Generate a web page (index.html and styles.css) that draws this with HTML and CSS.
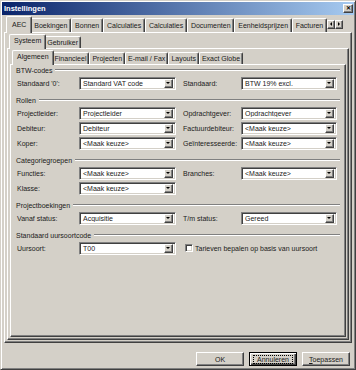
FILE: index.html
```html
<!DOCTYPE html>
<html lang="nl">
<head>
    <meta charset="UTF-8">
    <title>Instellingen</title>
    <link rel="stylesheet" href="styles.css">
</head>
<body>
    <div class="window">
        <div class="titlebar">
            <span class="title">Instellingen</span>
            <span class="close">&#x2715;</span>
        </div>

        <div class="tabs top">
            <div class="tab sel">AEC</div>
            <div class="tab">Boekingen</div>
            <div class="tab">Bonnen</div>
            <div class="tab">Calculaties</div>
            <div class="tab">Calculaties</div>
            <div class="tab">Documenten</div>
            <div class="tab">Eenheidsprijzen</div>
            <div class="tab">Facturen</div>
            <div class="scroll">
                <span class="arrow left"></span>
                <span class="arrow right"></span>
            </div>
        </div>
        <div class="page p1">
            <div class="tabs">
                <div class="tab sel">Systeem</div>
                <div class="tab">Gebruiker</div>
            </div>
            <div class="page p2">
                <div class="tabs">
                    <div class="tab sel">Algemeen</div>
                    <div class="tab">Financieel</div>
                    <div class="tab">Projecten</div>
                    <div class="tab">E-mail / Fax</div>
                    <div class="tab">Layouts</div>
                    <div class="tab">Exact Globe</div>
                </div>
                <div class="page p3">
                    <div class="form">
                        <div class="group">BTW-codes</div>
                        <div class="row">
                            <span class="lbl">Standaard '0':</span>
                            <div class="combo"><span class="val">Standard VAT code</span><span class="drop"></span></div>
                            <span class="lbl r">Standaard:</span>
                            <div class="combo r"><span class="val">BTW 19% excl.</span><span class="drop"></span></div>
                        </div>

                        <div class="group">Rollen</div>
                        <div class="row">
                            <span class="lbl">Projectleider:</span>
                            <div class="combo"><span class="val">Projectleider</span><span class="drop"></span></div>
                            <span class="lbl r">Opdrachtgever:</span>
                            <div class="combo r"><span class="val">Opdrachtgever</span><span class="drop"></span></div>
                        </div>
                        <div class="row">
                            <span class="lbl">Debiteur:</span>
                            <div class="combo"><span class="val">Debiteur</span><span class="drop"></span></div>
                            <span class="lbl r">Factuurdebiteur:</span>
                            <div class="combo r"><span class="val">&lt;Maak keuze&gt;</span><span class="drop"></span></div>
                        </div>
                        <div class="row">
                            <span class="lbl">Koper:</span>
                            <div class="combo"><span class="val">&lt;Maak keuze&gt;</span><span class="drop"></span></div>
                            <span class="lbl r">Geïnteresseerde:</span>
                            <div class="combo r"><span class="val">&lt;Maak keuze&gt;</span><span class="drop"></span></div>
                        </div>

                        <div class="group">Categoriegroepen</div>
                        <div class="row">
                            <span class="lbl">Functies:</span>
                            <div class="combo"><span class="val">&lt;Maak keuze&gt;</span><span class="drop"></span></div>
                            <span class="lbl r">Branches:</span>
                            <div class="combo r"><span class="val">&lt;Maak keuze&gt;</span><span class="drop"></span></div>
                        </div>
                        <div class="row">
                            <span class="lbl">Klasse:</span>
                            <div class="combo"><span class="val">&lt;Maak keuze&gt;</span><span class="drop"></span></div>
                        </div>

                        <div class="group">Projectboekingen</div>
                        <div class="row">
                            <span class="lbl">Vanaf status:</span>
                            <div class="combo"><span class="val">Acquisitie</span><span class="drop"></span></div>
                            <span class="lbl r">T/m status:</span>
                            <div class="combo r"><span class="val">Gereed</span><span class="drop"></span></div>
                        </div>

                        <div class="group">Standaard uursoortcode</div>
                        <div class="row">
                            <span class="lbl">Uursoort:</span>
                            <div class="combo"><span class="val">T00</span><span class="drop"></span></div>
                            <label class="check"><span class="box"></span>Tarieven bepalen op basis van uursoort</label>
                        </div>
                    </div>
                </div>
            </div>
        </div>

        <div class="footer">
            <button class="btn">OK</button>
            <button class="btn default"><span class="focus">Annuleren</span></button>
            <button class="btn"><u>T</u>oepassen</button>
        </div>
    </div>
</body>
</html>
```

FILE: styles.css
```css
body {
    margin: 0;
    background: #d4d0c8;
    font-family: "Liberation Sans", Arial, sans-serif;
    font-size: 7px;
    color: #1a1a1a;
}
.window {
    width: 356px;
    height: 370px;
    box-sizing: border-box;
    border: 1px solid;
    border-color: #d4d0c8 #404040 #404040 #d4d0c8;
    box-shadow: inset 1px 1px #fff, inset -1px -1px #808080;
    padding: 1px;
    display: flex;
    flex-direction: column;
    background: #d4d0c8;
}
.titlebar {
    height: 13px;
    display: flex;
    align-items: center;
    justify-content: space-between;
    padding: 0 1px 0 2px;
    background: linear-gradient(to right, #0a246a, #a6caf0);
    color: #fff;
}
.title {
    font-weight: bold;
    font-size: 7.5px;
}
.close {
    width: 10px;
    height: 9px;
    box-sizing: border-box;
    background: #d4d0c8;
    border: 1px solid;
    border-color: #fff #404040 #404040 #fff;
    box-shadow: inset -1px -1px #808080;
    color: #000;
    font-size: 6px;
    font-weight: bold;
    line-height: 7px;
    text-align: center;
}

/* tab strips */
.tabs {
    display: flex;
    align-items: flex-end;
    height: 14px;
    padding-left: 4px;
}
.tabs.top {
    height: 16px;
    margin: 1px 2px 0;
}
.tab {
    position: relative;
    box-sizing: border-box;
    height: 12px;
    padding: 0 2px;
    border: 1px solid;
    border-bottom: none;
    border-color: #fff #404040 #404040 #fff;
    border-radius: 2px 2px 0 0;
    box-shadow: inset -1px 0 #808080;
    line-height: 11px;
    white-space: nowrap;
    background: #d4d0c8;
}
.tabs.top .tab {
    height: 14px;
    padding: 0 3px;
    line-height: 13px;
    min-width: 25px;
    text-align: center;
}
.tab.sel {
    z-index: 1;
    height: 15px;
    margin: 0 -2px -1px;
    padding: 0 4px;
}
.tabs.top .tab.sel {
    height: 17px;
    padding: 1px 5px 0;
}
.scroll {
    display: flex;
    margin: 0 9px 3px auto;
}
.arrow {
    position: relative;
    width: 8px;
    height: 9px;
    box-sizing: border-box;
    border: 1px solid;
    border-color: #fff #404040 #404040 #fff;
    box-shadow: inset -1px -1px #808080;
}
.arrow::after {
    content: "";
    position: absolute;
    top: 1px;
    border: 2.5px solid transparent;
}
.arrow.left::after {
    left: 0;
    border-right: 2.5px solid #000;
}
.arrow.right::after {
    left: 2px;
    border-left: 2.5px solid #000;
}

/* tab pages */
.page {
    flex: 1;
    display: flex;
    flex-direction: column;
    border: 1px solid;
    border-color: #fff #404040 #404040 #fff;
    box-shadow: inset -1px -1px #808080;
    padding: 1px 2px 2px;
}
.p1 {
    margin: 0 2px;
}
.p3 {
    padding: 0;
}

/* form */
.form {
    padding: 0 5px 0 6px;
}
.group {
    display: flex;
    align-items: center;
    height: 10px;
    margin: 5px 0 0 -1px;
}
.group:first-child {
    margin-top: 0;
}
.group::after {
    content: "";
    flex: 1;
    margin-left: 3px;
    border-top: 1px solid #808080;
    border-bottom: 1px solid #fff;
}
.row {
    display: flex;
    align-items: center;
    height: 14px;
    margin-top: 1px;
}
.lbl {
    width: 62px;
    white-space: nowrap;
}
.lbl.r {
    width: 58px;
    margin-left: 7px;
}
.combo {
    width: 97px;
    height: 13px;
    box-sizing: border-box;
    display: flex;
    align-items: center;
    padding: 2px;
    background: #fff;
    border: 1px solid;
    border-color: #808080 #fff #fff #808080;
    box-shadow: inset 1px 1px #404040, inset -1px -1px #d4d0c8;
}
.combo.r {
    width: 96px;
}
.val {
    flex: 1;
    padding-left: 1px;
    white-space: nowrap;
    overflow: hidden;
}
.drop {
    position: relative;
    width: 9px;
    height: 9px;
    box-sizing: border-box;
    background: #d4d0c8;
    border: 1px solid;
    border-color: #fff #404040 #404040 #fff;
    box-shadow: inset -1px -1px #808080;
}
.drop::after {
    content: "";
    position: absolute;
    left: 1px;
    top: 2px;
    border: 2.5px solid transparent;
    border-top: 2.5px solid #000;
    border-bottom: none;
}
.check {
    display: flex;
    align-items: center;
    margin-left: 9px;
    white-space: nowrap;
}
.check .box {
    width: 8px;
    height: 8px;
    box-sizing: border-box;
    margin-right: 2px;
    background: #fff;
    border: 1px solid;
    border-color: #808080 #fff #fff #808080;
    box-shadow: inset 1px 1px #404040, inset -1px -1px #d4d0c8;
}

/* buttons */
.footer {
    height: 25px;
    display: flex;
    justify-content: flex-end;
    align-items: flex-start;
    gap: 5px;
    padding: 9px 4px 0 0;
    box-sizing: border-box;
}
.btn {
    width: 48px;
    height: 14px;
    padding: 0;
    font-family: inherit;
    font-size: 7px;
    color: #1a1a1a;
    background: #d4d0c8;
    border: 1px solid;
    border-color: #fff #404040 #404040 #fff;
    box-shadow: inset -1px -1px #808080;
}
.btn.default {
    border-color: #000;
    box-shadow: inset 1px 1px #fff, inset -1px -1px #404040, inset -2px -2px #808080;
}
.focus {
    outline: 1px dotted #000;
    padding: 0 3px;
}
```
